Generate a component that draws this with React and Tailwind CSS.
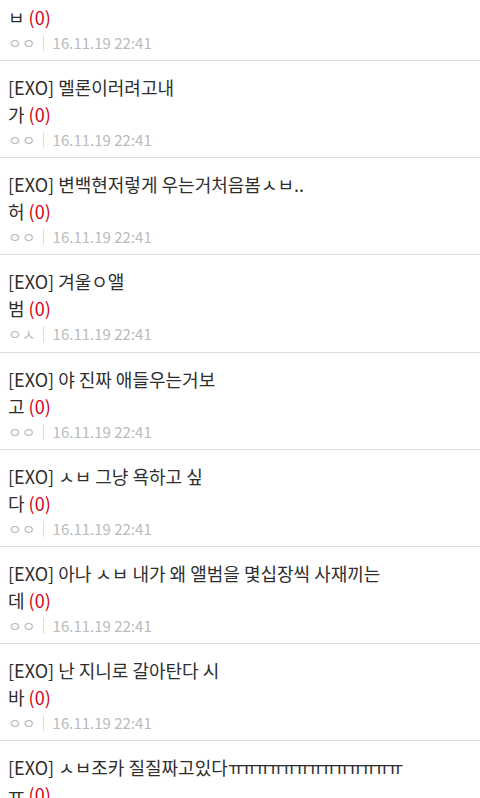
import React from 'react';

const posts = [
  { line1: null, line2: 'ㅂ', writer: 'ㅇㅇ' },
  { line1: '[EXO] 멜론이러려고내', line2: '가', writer: 'ㅇㅇ' },
  { line1: '[EXO] 변백현저렇게 우는거처음봄ㅅㅂ..', line2: '허', writer: 'ㅇㅇ' },
  { line1: '[EXO] 겨울ㅇ앨', line2: '범', writer: 'ㅇㅅ' },
  { line1: '[EXO] 야 진짜 애들우는거보', line2: '고', writer: 'ㅇㅇ' },
  { line1: '[EXO] ㅅㅂ 그냥 욕하고 싶', line2: '다', writer: 'ㅇㅇ' },
  { line1: '[EXO] 아나 ㅅㅂ 내가 왜 앨범을 몇십장씩 사재끼는', line2: '데', writer: 'ㅇㅇ' },
  { line1: '[EXO] 난 지니로 갈아탄다 시', line2: '바', writer: 'ㅇㅇ' },
  { line1: '[EXO] ㅅㅂ조카 질질짜고있다', tail: 'ㅠㅠㅠㅠㅠㅠㅠㅠㅠㅠㅠㅠㅠ', line2: 'ㅠ', writer: 'ㅇㅇ' },
];

const PostRow = ({ post }) => (
  <li className={`border-b border-[#dcdcdc] px-[8px] pb-[5.15px] ${post.line1 ? 'pt-[13px]' : 'pt-[4px]'}`}>
    {post.line1 && (
      <div className="text-[18px] leading-[27px] text-[#2e2e2e] whitespace-nowrap">
        {post.line1}
        {post.tail && <span className="tracking-[-3.3px]">{post.tail}</span>}
      </div>
    )}
    <div className="text-[18px] leading-[27px] text-[#2e2e2e]">
      {post.line2} <span className="text-[#d0021b]">(0)</span>
    </div>
    <div className="flex items-center text-[15px] leading-[24px] text-[#bbb]">
      <span>{post.writer}</span>
      <span className="ml-[7px] mr-[9px] h-[16px] w-px bg-[#ddd]" />
      <span>16.11.19 22:41</span>
    </div>
  </li>
);

export default function App() {
  return (
    <div
      className="w-[480px] h-[798px] overflow-hidden bg-white"
      style={{ fontFamily: '"Noto Sans CJK KR", "Noto Sans", sans-serif' }}
    >
      <ul>
        {posts.map((post, i) => (
          <PostRow key={i} post={post} />
        ))}
      </ul>
    </div>
  );
}
